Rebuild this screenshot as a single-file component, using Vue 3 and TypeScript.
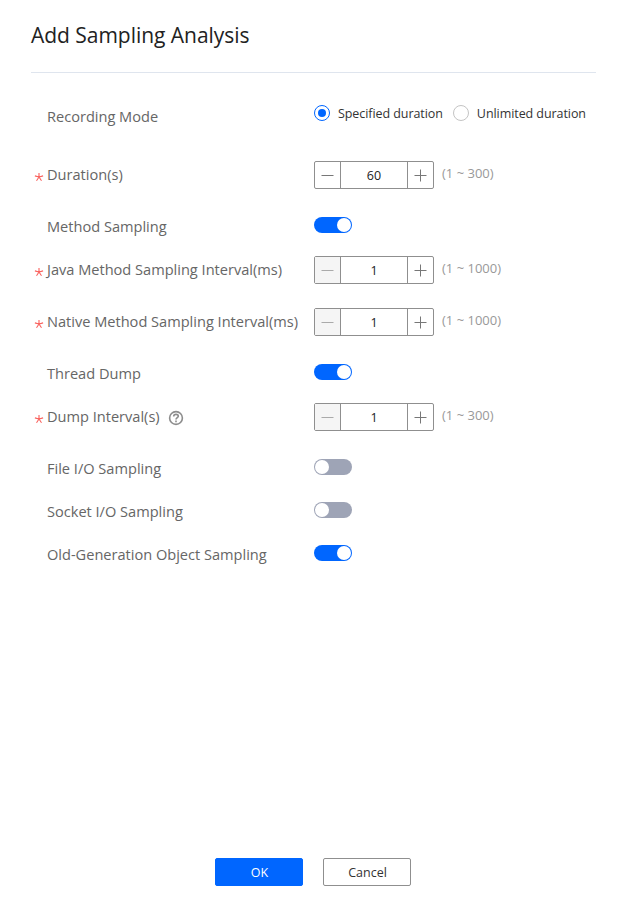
<script setup lang="ts">
import { ref } from 'vue'

interface Field {
  label: string
  kind: 'radio' | 'stepper' | 'switch'
  required?: boolean
  help?: boolean
  value?: number
  max?: number
  on?: boolean
}

const fields = ref<Field[]>([
  { label: 'Recording Mode', kind: 'radio' },
  { label: 'Duration(s)', kind: 'stepper', required: true, value: 60, max: 300 },
  { label: 'Method Sampling', kind: 'switch', on: true },
  { label: 'Java Method Sampling Interval(ms)', kind: 'stepper', required: true, value: 1, max: 1000 },
  { label: 'Native Method Sampling Interval(ms)', kind: 'stepper', required: true, value: 1, max: 1000 },
  { label: 'Thread Dump', kind: 'switch', on: true },
  { label: 'Dump Interval(s)', kind: 'stepper', required: true, help: true, value: 1, max: 300 },
  { label: 'File I/O Sampling', kind: 'switch', on: false },
  { label: 'Socket I/O Sampling', kind: 'switch', on: false },
  { label: 'Old-Generation Object Sampling', kind: 'switch', on: true },
])

const modes = ['Specified duration', 'Unlimited duration']
const mode = ref(modes[0])

function step(field: Field, delta: number) {
  field.value = Math.min(field.max ?? 1, Math.max(1, (field.value ?? 1) + delta))
}
</script>

<template>
  <main class="dialog">
    <header class="head"><h1 class="title">Add Sampling Analysis</h1></header>

    <section class="form">
      <div v-for="field in fields" :key="field.label" class="row" :class="'row-' + field.kind">
        <div class="name">
          <span class="mark">
            <svg v-if="field.required" width="10" height="10" viewBox="0 0 10 10">
              <path d="M5 5V.9M5 5 .9 3.900M5 5l4.100-1.100M5 5 2.500 8.700M5 5l2.500 3.700" />
            </svg>
          </span>
          <span class="label">{{ field.label }}</span>
          <svg v-if="field.help" class="help" width="16" height="16" viewBox="0 0 16 16">
            <circle cx="8" cy="8" r="6.4" />
            <path d="M5.700 6.500C5.700 5.100 6.700 4.400 8 4.400s2.300.8 2.300 1.900C10.300 7.700 8 7.800 8 9.600" />
            <path d="M8 10.600v1.600" />
          </svg>
        </div>

        <div v-if="field.kind === 'radio'" class="radios">
          <button v-for="m in modes" :key="m" class="radio-item" @click="mode = m">
            <span class="dot" :class="{ checked: mode === m }"></span>
            <span class="radio-text">{{ m }}</span>
          </button>
        </div>

        <template v-else-if="field.kind === 'stepper'">
          <div class="number">
            <button class="step minus" :disabled="field.value === 1" @click="step(field, -1)">
              <svg width="13" height="13" viewBox="0 0 13 13"><path d="M.5 6.500h12" /></svg>
            </button>
            <span class="value">{{ field.value }}</span>
            <button class="step plus" @click="step(field, 1)">
              <svg width="13" height="13" viewBox="0 0 13 13"><path d="M.5 6.500h12M6.500 .5v12" /></svg>
            </button>
          </div>
          <span class="range">(1 ~ {{ field.max }})</span>
        </template>

        <button v-else class="switch" :class="{ on: field.on }" @click="field.on = !field.on">
          <span class="knob"></span>
        </button>
      </div>
    </section>

    <footer class="foot">
      <button class="btn primary">OK</button>
      <button class="btn">Cancel</button>
    </footer>
  </main>
</template>

<style>
body {
  background: #fff;
}
</style>

<style scoped>
.dialog {
  box-sizing: border-box;
  width: 628px;
  height: 900px;
  padding: 0 32px 14px 31px;
  display: flex;
  flex-direction: column;
  font-family: "Open Sans", "Noto Sans", sans-serif;
  background: #fff;
}
button {
  box-sizing: border-box;
  margin: 0;
  padding: 0;
  border: 0;
  background: none;
  font: inherit;
  color: inherit;
}
svg {
  display: block;
  flex: none;
  fill: none;
}
.head {
  box-sizing: border-box;
  height: 73px;
  padding-top: 20px;
  border-bottom: 1px solid #dfe5ee;
}
.title {
  margin: 0;
  font-size: 21px;
  font-weight: 400;
  line-height: 30px;
  letter-spacing: -0.03px;
  color: #222;
}
.form {
  flex: 1;
  padding-top: 30px;
}
.row {
  display: flex;
  align-items: flex-start;
}
.row-radio {
  height: 58px;
}
.row-stepper {
  height: 52px;
}
.row-switch {
  height: 43px;
}
.name {
  display: flex;
  flex: none;
  align-items: center;
  width: 283px;
  height: 26px;
  color: #666;
}
.mark {
  width: 13px;
  padding: 5px 0 0 3px;
}
.mark path {
  stroke: #f9605c;
  stroke-width: 1.1;
}
.label {
  font-size: 14.6px;
  line-height: 26px;
  letter-spacing: -0.01px;
  white-space: nowrap;
}
.help {
  margin: 4px 0 0 8px;
  stroke: #8d8d8d;
  stroke-width: 1.6;
}
.radios {
  display: flex;
  gap: 10px;
  margin-top: 2px;
}
.radio-item {
  display: flex;
  align-items: center;
  height: 16px;
}
.dot {
  box-sizing: border-box;
  width: 16px;
  height: 16px;
  margin-right: 8px;
  border: 1px solid #c4c4c4;
  border-radius: 50%;
}
.dot.checked {
  padding: 3px;
  border-color: #06f;
  background: #06f content-box;
}
.radio-text {
  padding-top: 1px;
  font-size: 12.5px;
  line-height: 16px;
  letter-spacing: -0.07px;
  white-space: nowrap;
  color: #333;
}
.number {
  box-sizing: border-box;
  display: flex;
  width: 120px;
  height: 28px;
  border: 1px solid #8f8f8f;
  border-radius: 2px;
}
.step {
  display: flex;
  align-items: center;
  justify-content: center;
  width: 26px;
  height: 26px;
}
.step path {
  stroke: #777;
}
.minus {
  border-right: 1px solid #8f8f8f;
}
.plus {
  padding-right: 1px;
  border-left: 1px solid #8f8f8f;
}
.step:disabled {
  background: #f5f5f5;
}
.step:disabled path {
  stroke: #aaa;
}
.value {
  flex: 1;
  font-size: 12.5px;
  line-height: 27px;
  text-align: center;
  color: #222;
}
.range {
  margin-left: 8px;
  font-size: 13px;
  line-height: 25px;
  color: #999;
}
.switch {
  display: flex;
  width: 38px;
  height: 16px;
  margin-top: 4px;
  padding: 1px;
  border-radius: 8px;
  background: #9ea4b6;
}
.switch.on {
  justify-content: flex-end;
  background: #06f;
}
.knob {
  width: 14px;
  height: 14px;
  border-radius: 50%;
  background: #fff;
}
.foot {
  display: flex;
  gap: 20px;
  padding-left: 184px;
}
.btn {
  width: 88px;
  height: 28px;
  padding: 2px 0 0 1px;
  border: 1px solid #8f8f8f;
  border-radius: 2px;
  font-size: 12.5px;
  line-height: 24px;
  color: #333;
}
.primary {
  border-color: #06f;
  background: #06f;
  color: #fff;
}
</style>
